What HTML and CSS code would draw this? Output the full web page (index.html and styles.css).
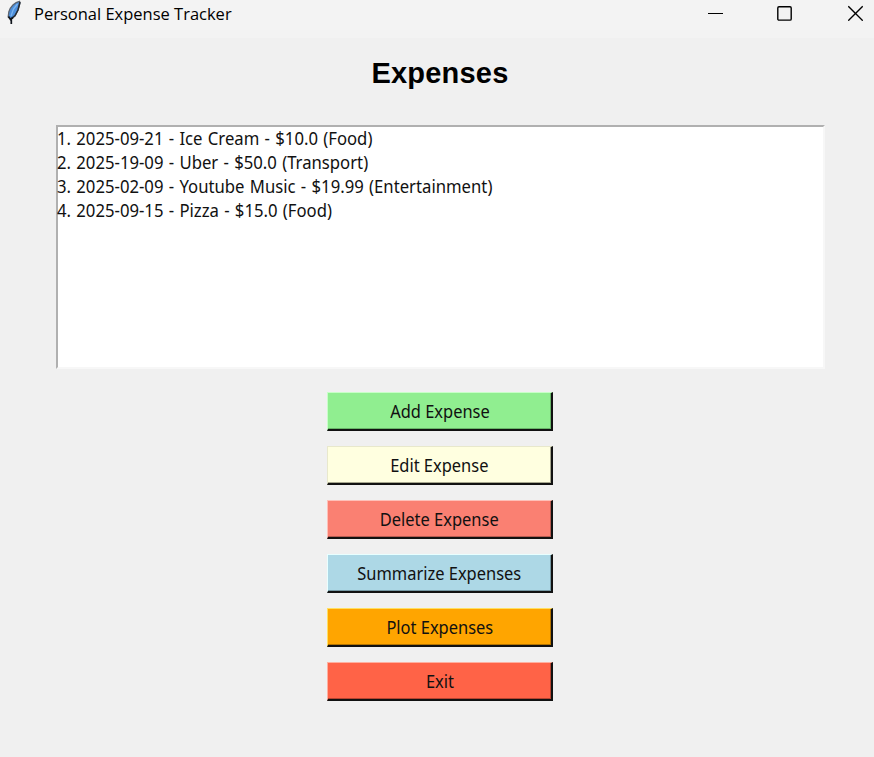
FILE: index.html
```html
<!DOCTYPE html>
<html lang="en">
<head>
<meta charset="utf-8">
<title>Personal Expense Tracker</title>
<link rel="stylesheet" href="styles.css">
</head>
<body>
<header class="titlebar">
  <svg class="feather" width="16" height="26" viewBox="0 0 16 26">
    <path d="M13.500 1.300C9 2 4 7 2.800 12L2.200 17L5 19L9 16L12 10L14 3Z" fill="#4c8fdc" stroke="#5d6570" stroke-width="1.300"/>
    <path d="M11.500 4L7.500 9L5 16" fill="none" stroke="#7db5f0" stroke-width="1.300"/>
    <path d="M14 2L12 10L9 15.500L5.500 18.500" fill="none" stroke="#262c35" stroke-width="1.500"/>
    <path d="M2.500 16.500L4.500 19.500L7 17.500M5.300 18L5.300 24" fill="none" stroke="#10151c" stroke-width="1.700"/>
  </svg>
  <span class="window-title">Personal Expense Tracker</span>
  <div class="controls">
    <svg width="15" height="16" viewBox="0 0 15 16"><path d="M0 8.500H15" stroke="#000"/></svg>
    <svg class="maximize" width="15" height="16" viewBox="0 0 15 16"><rect x=".8" y="1.700" width="13.400" height="13.400" rx="1.200" fill="none" stroke="#000" stroke-width="1.400"/></svg>
    <svg width="15" height="16" viewBox="0 0 15 16"><path d="M.3 1.300L14.700 15.700M14.700 1.300L.3 15.700" stroke="#000" stroke-width="1.300"/></svg>
  </div>
</header>
<main class="content">
  <h1>Expenses</h1>
  <ul class="listbox">
    <li><span>1. 2025-09-21 - Ice Cream - $10.0 (Food)</span></li>
    <li><span>2. 2025-19-09 - Uber - $50.0 (Transport)</span></li>
    <li><span>3. 2025-02-09 - Youtube Music - $19.99 (Entertainment)</span></li>
    <li><span>4. 2025-09-15 - Pizza - $15.0 (Food)</span></li>
  </ul>
  <div class="actions">
    <button class="add"><span>Add Expense</span></button>
    <button class="edit"><span>Edit Expense</span></button>
    <button class="delete"><span>Delete Expense</span></button>
    <button class="summarize"><span>Summarize Expenses</span></button>
    <button class="plot"><span>Plot Expenses</span></button>
    <button class="exit"><span>Exit</span></button>
  </div>
</main>
</body>
</html>
```
FILE: styles.css
```css
* { box-sizing: border-box; }
body {
  margin: 0;
  height: 757px;
  overflow: hidden;
  background: #f0f0f0;
  color: #111;
  font-family: "Noto Sans", sans-serif;
}
.titlebar {
  display: flex;
  height: 38px;
  padding: 0 11px 0 6px;
  background: #f3f3f3;
}
.feather { flex: none; }
.window-title {
  margin-left: 12px;
  font-family: "Open Sans", sans-serif;
  font-size: 17px;
  line-height: 28px;
  white-space: nowrap;
  color: #000;
  transform: scaleX(.97);
  transform-origin: left;
}
.controls {
  display: flex;
  gap: 55px;
  margin-left: auto;
  padding-top: 5px;
}
.controls svg { flex: none; }
.controls .maximize { margin: 0 1px 0 -1px; }
.content {
  display: flex;
  flex-direction: column;
  align-items: center;
  padding-left: 6px;
}
h1 {
  margin: 17px 0 0;
  font: bold 29px/36px "Liberation Sans", sans-serif;
  letter-spacing: .2px;
  color: #000;
}
.listbox {
  width: 769px;
  height: 244px;
  margin: 34px 0 0;
  padding: 0;
  list-style: none;
  background: #fff;
  border: 2px solid;
  border-color: #b0b0b0 #f7f7f7 #f7f7f7 #b0b0b0;
  font-size: 17.5px;
}
.listbox li { height: 24px; line-height: 22px; white-space: nowrap; }
.listbox span {
  display: inline-block;
  margin-left: -1px;
  word-spacing: 1px;
  transform: scaleX(.954);
  transform-origin: left;
}
.actions {
  display: flex;
  flex-direction: column;
  gap: 15px;
  margin-top: 23px;
}
button {
  width: 226px;
  height: 39px;
  padding: 0;
  border: 2px solid;
  border-width: 1px 2px 2px 1px;
  border-color: var(--light) #111 #111 var(--light);
  box-shadow: inset -1px -1px 0 var(--shade);
  background: var(--face);
  color: #111;
  font: 17.5px/34px "Noto Sans", sans-serif;
}
button span { display: inline-block; transform: scaleX(.94); }
.add { --face: #90ee90; --light: #c8ffc8; --shade: #68b468; }
.edit { --face: #ffffe0; --light: #e8e8cc; --shade: #a7a78e; }
.delete { --face: #fa8072; --light: #ffc0b8; --shade: #b65b50; }
.summarize { --face: #add8e6; --light: #e8ffff; --shade: #7699a4; }
.plot { --face: #ffa500; --light: #ffe060; --shade: #b47400; }
.exit { --face: #ff6347; --light: #ffb0a0; --shade: #b64430; }
```
